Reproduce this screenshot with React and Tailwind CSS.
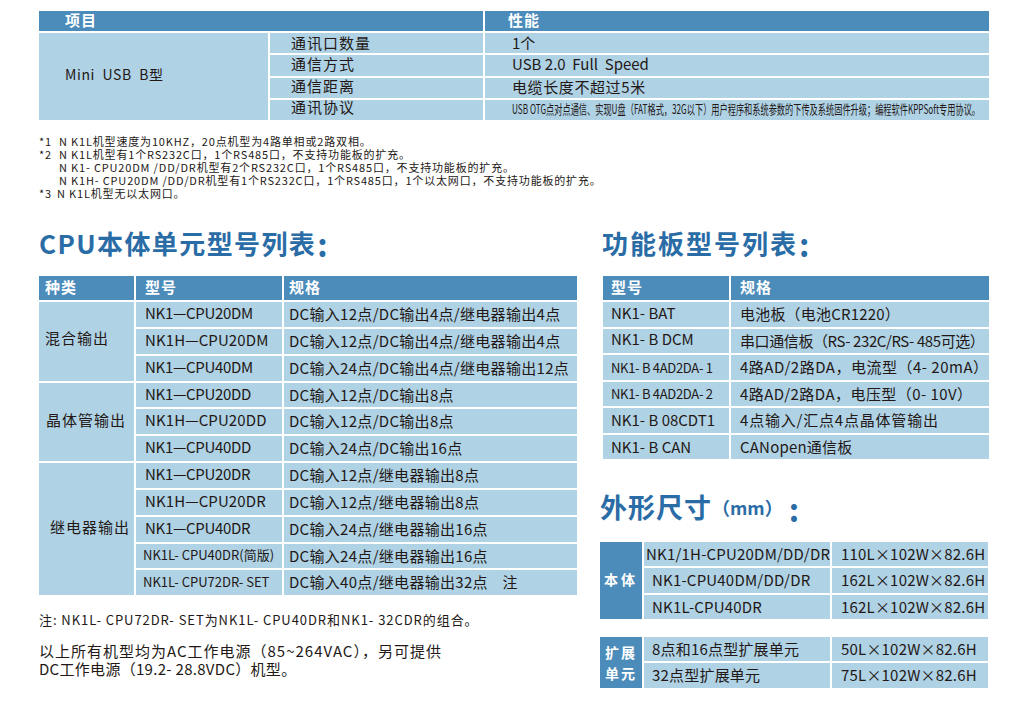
import React from 'react'

const Head = ({ children, className = '' }) => (
  <div className={`flex items-center bg-[#4c8cbb] font-bold text-white ${className}`}>{children}</div>
)

const Cell = ({ children, className = '' }) => (
  <div className={`flex items-center whitespace-nowrap bg-[#afd2e5] ${className}`}>{children}</div>
)

const cpuGroups = [
  {
    name: '混合输出',
    nameClass: 'pb-[7px] pl-[6px] tracking-[1px]',
    rows: [
      ['NK1—CPU20DM', 'DC输入12点/DC输出4点/继电器输出4点'],
      ['NK1H—CPU20DM', 'DC输入12点/DC输出4点/继电器输出4点'],
      ['NK1—CPU40DM', 'DC输入24点/DC输出4点/继电器输出12点'],
    ],
  },
  {
    name: '晶体管输出',
    nameClass: 'pb-[4px] pl-[7px] tracking-[1px]',
    rows: [
      ['NK1—CPU20DD', 'DC输入12点/DC输出8点'],
      ['NK1H—CPU20DD', 'DC输入12点/DC输出8点'],
      ['NK1—CPU40DD', 'DC输入24点/DC输出16点'],
    ],
  },
  {
    name: '继电器输出',
    nameClass: 'pb-[4px] pl-[11px] tracking-[1px]',
    rows: [
      ['NK1—CPU20DR', 'DC输入12点/继电器输出8点'],
      ['NK1H—CPU20DR', 'DC输入12点/继电器输出8点'],
      ['NK1—CPU40DR', 'DC输入24点/继电器输出16点'],
      ['NK1L- CPU40DR(简版)', 'DC输入24点/继电器输出16点'],
      ['NK1L- CPU72DR- SET', 'DC输入40点/继电器输出32点\u00a0\u00a0\u00a0\u00a0注'],
    ],
  },
]

const boards = [
  ['NK1- BAT', 'pb-[3px] pl-[8px]', '电池板（电池CR1220）', 'tracking-[0.2px]'],
  ['NK1- B DCM', 'pb-[3px] pl-[8px]', '串口通信板（RS- 232C/RS- 485可选）', 'tracking-[-0.4px]'],
  ['NK1- B 4AD2DA- 1', 'pl-[8px] text-[13px] tracking-[-0.3px]', '4路AD/2路DA，电流型（4- 20mA）', 'tracking-[0.5px]'],
  ['NK1- B 4AD2DA- 2', 'pl-[8px] text-[13px] tracking-[-0.3px]', '4路AD/2路DA，电压型（0- 10V）', 'tracking-[0.45px]'],
  ['NK1- B 08CDT1', 'pl-[8px]', '4点输入/汇点4点晶体管输出', 'tracking-[0.8px]'],
  ['NK1- B CAN', 'pl-[8px]', 'CANopen通信板', 'tracking-[0.2px]'],
]

const modelClass = (model) => {
  if (model.startsWith('NK1L')) return 'pb-[2px] pl-[7px] text-[13px]'
  if (model.startsWith('NK1H')) return 'pb-[2px] pl-[9px] tracking-[0.1px]'
  return 'pb-[2px] pl-[9px] tracking-[-0.3px]'
}

const App = () => {
  return (
    <div className="h-[702px] w-[1021px] overflow-hidden bg-white pl-[39px] pt-[11px] font-['Noto_Sans_CJK_SC',sans-serif] text-[#231815]">
      {/* 通讯口 table */}
      <div className="grid w-[950px] grid-cols-[229px_213px_504px] grid-rows-[20px_20px_21px_20px_20px] gap-[2px] text-[15px] leading-[18px]">
        <Head className="col-span-2 pb-[3px] pl-[26px] tracking-[1px]">项目</Head>
        <Head className="pb-[3px] pl-[23px] tracking-[1px]">性能</Head>
        <Cell className="row-span-4 pb-[6px] pl-[26px] text-[14px] tracking-[0.6px]">Mini&nbsp; USB&nbsp; B型</Cell>
        <Cell className="pl-[21px] tracking-[1px]">通讯口数量</Cell>
        <Cell className="pl-[27px]">1个</Cell>
        <Cell className="pb-[4px] pl-[21px] tracking-[1px]">通信方式</Cell>
        <Cell className="pb-[4px] pl-[27px]">USB 2.0&nbsp; Full&nbsp; Speed</Cell>
        <Cell className="pb-[4px] pl-[21px] tracking-[1px]">通信距离</Cell>
        <Cell className="pb-[2px] pl-[27px] tracking-[0.6px]">电缆长度不超过5米</Cell>
        <Cell className="pb-[6px] pl-[21px] tracking-[1px]">通讯协议</Cell>
        <Cell className="pb-[2px] pl-[27px]">
          <span className="origin-left scale-x-[0.63] text-[13px]">USB OTG点对点通信、实现U盘（FAT格式，32G以下）用户程序和系统参数的下传及系统固件升级；编程软件KPPSoft专用协议。</span>
        </Cell>
      </div>

      {/* 注释 */}
      <div className="mt-[15px] text-[11px] leading-[13px] tracking-[0.83px]">
        <div className="flex"><span className="w-[20px]">*1</span>N K1L机型速度为10KHZ，20点机型为4路单相或2路双相。</div>
        <div className="flex"><span className="w-[20px]">*2</span>N K1L机型有1个RS232C口，1个RS485口，不支持功能板的扩充。</div>
        <div className="pl-[20px]">N K1- CPU20DM /DD/DR机型有2个RS232C口，1个RS485口，不支持功能板的扩充。</div>
        <div className="pl-[20px]">N K1H- CPU20DM /DD/DR机型有1个RS232C口，1个RS485口，1个以太网口，不支持功能板的扩充。</div>
        <div className="flex"><span className="w-[18px]">*3</span>N K1L机型无以太网口。</div>
      </div>

      <div className="mt-[22px] flex gap-[23px]">
        {/* CPU column */}
        <div className="w-[538px]">
          <h2 className="flex h-[46px] items-center pb-[5px] text-[26px] font-bold tracking-[1.4px] text-[#2a6ca6]">CPU本体单元型号列表<span className="ml-[1px] text-[32px] leading-none">:</span></h2>
          <div className="mt-[8px] grid grid-cols-[95px_146px_293px] grid-rows-[24px_25px_25px_25px_24px_25px_25px_25px_25px_25px_24px_25px] gap-[2px] text-[15px]">
            <Head className="pb-[1px] pl-[6px] tracking-[1px]">种类</Head>
            <Head className="pb-[1px] pl-[9px] tracking-[1px]">型号</Head>
            <Head className="pb-[1px] pl-[5px] tracking-[1px]">规格</Head>
            {cpuGroups.map((group) => (
              <React.Fragment key={group.name}>
                <Cell className={`${group.rows.length === 5 ? 'row-span-5' : 'row-span-3'} ${group.nameClass}`}>{group.name}</Cell>
                {group.rows.map(([model, spec]) => (
                  <React.Fragment key={model}>
                    <Cell className={modelClass(model)}>{model}</Cell>
                    <Cell className="pl-[5px] tracking-[0.3px]">{spec}</Cell>
                  </React.Fragment>
                ))}
              </React.Fragment>
            ))}
          </div>
          <p className="mt-[15px] h-[20px] text-[13px] leading-[20px] tracking-[0.94px]">注: NK1L- CPU72DR- SET为NK1L- CPU40DR和NK1- 32CDR的组合。</p>
          <div className="mt-[12px] text-[15px] leading-[18px]">
            <p className="tracking-[1px]">以上所有机型均为AC工作电源（85~264VAC），另可提供</p>
            <p className="tracking-[0.3px]">DC工作电源（19.2- 28.8VDC）机型。</p>
          </div>
        </div>

        {/* 功能板 and 尺寸 column */}
        <div className="w-[389px]">
          <h2 className="ml-[2px] flex h-[46px] items-center pb-[5px] text-[26px] font-bold tracking-[2px] text-[#2a6ca6]">功能板型号列表<span className="ml-[1px] text-[32px] leading-none">:</span></h2>
          <div className="ml-[3px] mt-[8px] grid grid-cols-[126px_258px] grid-rows-[24px_25px_24px_25px_24px_25px_24px] gap-[2px] text-[15px]">
            <Head className="pb-[1px] pl-[8px] tracking-[1px]">型号</Head>
            <Head className="pb-[1px] pl-[9px] tracking-[1px]">规格</Head>
            {boards.map(([model, cls, spec, specClass]) => (
              <React.Fragment key={model}>
                <Cell className={cls}>{model}</Cell>
                <Cell className={`pl-[9px] ${specClass}`}>{spec}</Cell>
              </React.Fragment>
            ))}
          </div>

          <h2 className="mt-[28px] flex h-[46px] items-center pb-[5px] text-[27px] font-bold tracking-[1px] text-[#2a6ca6]">外形尺寸<span className="text-[18px] tracking-[0px]">（mm）</span><span className="ml-[6px] text-[32px] leading-none">:</span></h2>
          <div className="mt-[9px] grid grid-cols-[42px_186px_156px] grid-rows-[24px_25px_24px] gap-[2px] text-[15px] tracking-[0.2px]">
            <Head className="row-span-3 justify-center pb-[2px] text-[14px] tracking-[3px]">本体</Head>
            <Cell className="pl-[2px]">NK1/1H-CPU20DM/DD/DR</Cell>
            <Cell className="pl-[9px]">110L×102W×82.6H</Cell>
            <Cell className="pl-[8px]">NK1-CPU40DM/DD/DR</Cell>
            <Cell className="pl-[9px]">162L×102W×82.6H</Cell>
            <Cell className="pl-[8px]">NK1L-CPU40DR</Cell>
            <Cell className="pl-[9px]">162L×102W×82.6H</Cell>
          </div>
          <div className="mt-[18px] grid grid-cols-[42px_186px_156px] grid-rows-[24px_25px] gap-[2px] text-[15px] tracking-[0.2px]">
            <Head className="row-span-2 justify-center text-center text-[14px] leading-[21px] tracking-[2px]">扩展<br />单元</Head>
            <Cell className="pl-[8px]">8点和16点型扩展单元</Cell>
            <Cell className="pl-[9px]">50L×102W×82.6H</Cell>
            <Cell className="pl-[8px]">32点型扩展单元</Cell>
            <Cell className="pl-[9px]">75L×102W×82.6H</Cell>
          </div>
        </div>
      </div>
    </div>
  )
}

export default App
